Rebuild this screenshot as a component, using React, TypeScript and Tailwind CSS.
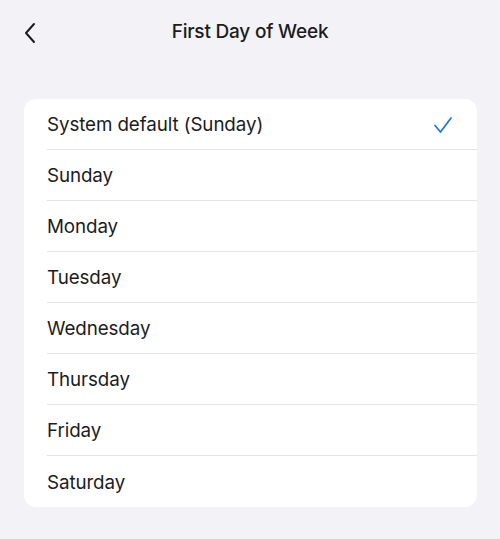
const DAYS = [
  'System default (Sunday)',
  'Sunday',
  'Monday',
  'Tuesday',
  'Wednesday',
  'Thursday',
  'Friday',
  'Saturday',
];

export default function App() {
  const selected = 0;
  return (
    <div className="w-[500px] h-[539px] bg-[#f2f2f7] text-[#1c1c1e] font-['Inter',sans-serif] overflow-hidden">
      <header className="relative h-[64px] flex items-center justify-center">
        <button className="absolute left-[22px] top-[21px] text-[#1c1c1e]">
          <svg width="16" height="24" viewBox="0 0 16 24" fill="none">
            <path d="M12 3 L4 12 L12 21" stroke="currentColor" strokeWidth="2" strokeLinecap="round" strokeLinejoin="round" />
          </svg>
        </button>
        <h1 className="text-[19px] font-[550] tracking-[-0.2px]">First Day of Week</h1>
      </header>

      <div className="mx-[24px] mt-[35px] w-[453px] rounded-[12px] bg-white overflow-hidden">
        {DAYS.map((d, i) => (
          <div key={d} className="pl-[23px]">
            <div className={`h-[51px] flex items-center pr-[24px] ${i < DAYS.length - 1 ? 'border-b border-[#e3e3e8]' : ''}`}>
              <span className="flex-1 pt-[3px] text-[18.8px] tracking-[-0.1px]">{d}</span>
              {i === selected && (
                <svg width="20" height="18" viewBox="0 0 20 18" fill="none" className="text-[#1e7bdc] mt-[1px]">
                  <path d="M2 9.5 L7.5 16 L18 2" stroke="currentColor" strokeWidth="1.8" strokeLinecap="round" strokeLinejoin="round" />
                </svg>
              )}
            </div>
          </div>
        ))}
      </div>
    </div>
  );
}
